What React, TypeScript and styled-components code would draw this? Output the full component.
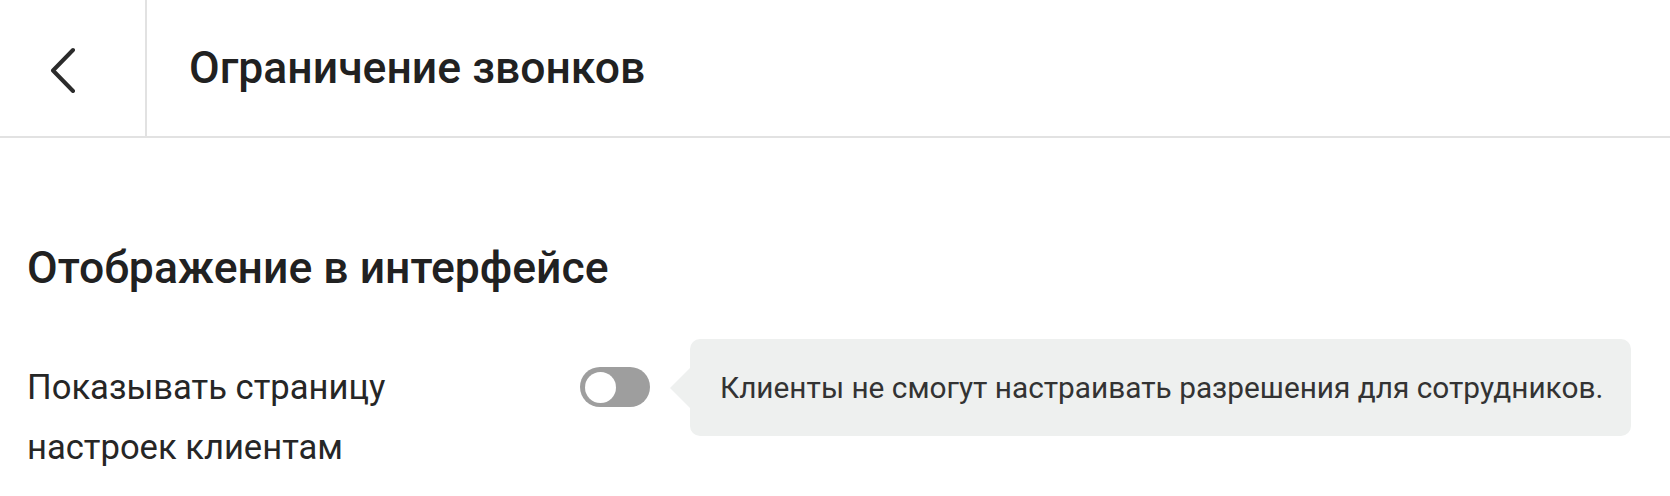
import React from "react";
import styled, { createGlobalStyle } from "styled-components";

const Global = createGlobalStyle`
  html, body { margin: 0; padding: 0; background: #ffffff; }
  body { font-family: Roboto, "Noto Sans", "Liberation Sans", sans-serif; color: #212121; }
`;

const Page = styled.div`
  width: 1670px;
  height: 496px;
  overflow: hidden;
  background: #ffffff;
`;

const Header = styled.header`
  display: flex;
  align-items: stretch;
  height: 136px;
  border-bottom: 2px solid #e2e2e2;
`;

const BackButton = styled.button`
  display: flex;
  align-items: center;
  width: 147px;
  padding: 0 0 0 48px;
  margin: 0;
  border: none;
  border-right: 2px solid #e2e2e2;
  background: transparent;
  cursor: pointer;
  color: #333333;
`;

const Title = styled.h1`
  display: flex;
  align-items: center;
  margin: 0;
  padding-left: 42px;
  font-size: 44.5px;
  font-weight: 500;
  color: #212121;
`;

const Content = styled.main`
  padding: 105px 27px 0 27px;
`;

const SectionTitle = styled.h2`
  margin: 0;
  font-size: 44.5px;
  line-height: 50px;
  font-weight: 500;
  color: #212121;
`;

const Row = styled.div`
  display: flex;
  align-items: flex-start;
  margin-top: 64px;
`;

const Label = styled.div`
  width: 420px;
  margin-right: 133px;
  font-size: 34.6px;
  line-height: 60px;
  font-weight: 400;
  color: #262626;
`;

const ToggleTrack = styled.div<{ $on?: boolean }>`
  flex: none;
  display: flex;
  align-items: center;
  justify-content: ${(p) => (p.$on ? "flex-end" : "flex-start")};
  width: 70px;
  height: 40px;
  margin-top: 10px;
  padding: 0 5px;
  box-sizing: border-box;
  border-radius: 20px;
  background: #9e9e9e;
`;

const Knob = styled.div`
  width: 31px;
  height: 31px;
  border-radius: 50%;
  background: #ffffff;
`;

const Hint = styled.div`
  position: relative;
  margin-left: 40px;
  margin-top: -18px;
  padding: 0 28px 0 30px;
  height: 97px;
  display: flex;
  align-items: center;
  border-radius: 10px;
  background: #eef0ef;
  font-size: 29.8px;
  color: #333333;
  &::before {
    content: "";
    position: absolute;
    left: -20px;
    top: 50%;
    transform: translateY(-50%);
    border-top: 20px solid transparent;
    border-bottom: 20px solid transparent;
    border-right: 20px solid #eef0ef;
  }
`;

export default function App() {
  return (
    <Page>
      <Global />
      <Header>
        <BackButton aria-label="Назад">
          <svg width="30" height="50" viewBox="0 0 30 50" fill="none">
            <path d="M25 7 L5 27.5 L25 48" stroke="#2b2b2b" strokeWidth="4" strokeLinecap="round" strokeLinejoin="round" />
          </svg>
        </BackButton>
        <Title>Ограничение звонков</Title>
      </Header>
      <Content>
        <SectionTitle>Отображение в интерфейсе</SectionTitle>
        <Row>
          <Label>Показывать страницу настроек клиентам</Label>
          <ToggleTrack>
            <Knob />
          </ToggleTrack>
          <Hint>Клиенты не смогут настраивать разрешения для сотрудников.</Hint>
        </Row>
      </Content>
    </Page>
  );
}
